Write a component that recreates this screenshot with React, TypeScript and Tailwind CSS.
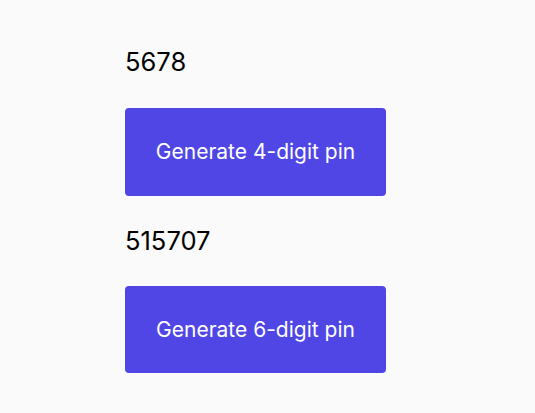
export default function App() {
  return (
    <div className="min-h-[413px] bg-[#fafafa] pl-[125px] pt-[46px] font-['Inter',sans-serif] text-black">
      <div className="flex flex-col items-start">
        <p className="text-[25.5px] leading-8">5678</p>
        <button className="mt-[30px] h-[88px] w-[261px] rounded bg-[#4f46e5] text-[21px] text-white">
          Generate 4-digit pin
        </button>
        <p className="mt-[29px] text-[25.5px] leading-8">515707</p>
        <button className="mt-[29px] h-[87px] w-[261px] rounded bg-[#4f46e5] text-[21px] text-white">
          Generate 6-digit pin
        </button>
      </div>
    </div>
  );
}
